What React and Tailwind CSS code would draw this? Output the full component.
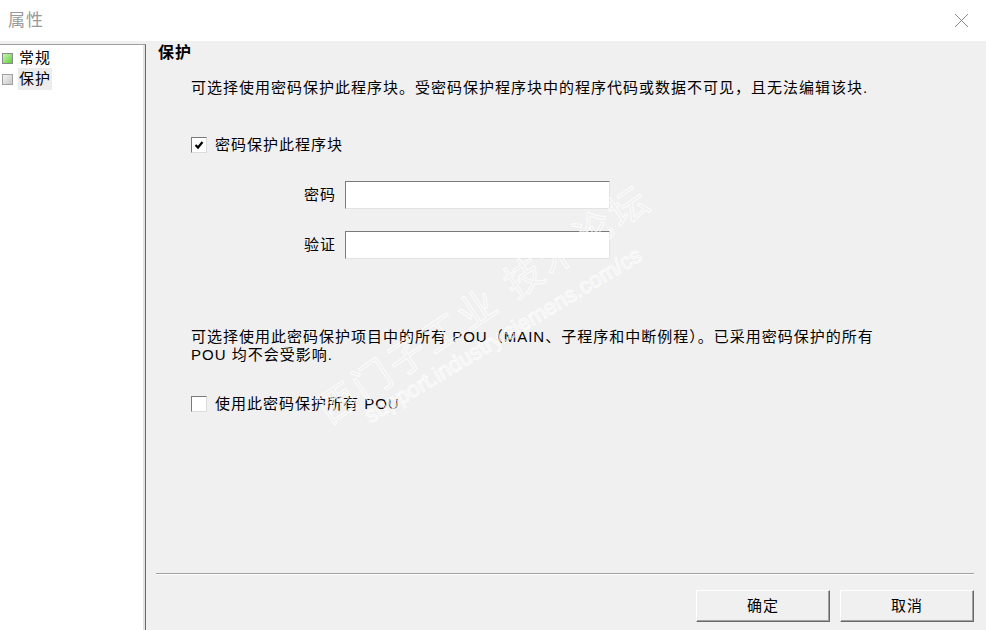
import { useState } from 'react';

const font = "font-['Liberation_Sans','Noto_Sans_CJK_SC',sans-serif]";

const Checkbox = ({ checked, onChange }) => (
  <button
    onClick={onChange}
    className="flex h-4 w-4 items-center justify-center border border-t-[#7a7a7a] border-l-[#7a7a7a] border-r-[#dcdcdc] border-b-[#dcdcdc] bg-white"
  >
    {checked && (
      <svg width="10" height="10" viewBox="0 0 10 10">
        <path d="M1.5 5 L4 7.5 L8.5 2" stroke="#000" strokeWidth="2.2" fill="none" />
      </svg>
    )}
  </button>
);

const Field = ({ label }) => (
  <div className="flex items-center">
    <span className="w-[199px] pr-[9px] text-right">{label}</span>
    <input className="h-[28px] w-[265px] border border-t-[#7a7a7a] border-l-[#7a7a7a] border-r-[#e3e3e3] border-b-[#e3e3e3] bg-white px-1 outline-none" />
  </div>
);

const DlgButton = ({ children }) => (
  <button className="h-[32px] w-[134px] border border-t-white border-l-white border-r-[#696969] border-b-[#696969] bg-[#f0f0f0] shadow-[inset_-1px_-1px_0_#a0a0a0] text-[15px] tracking-[1px]">
    {children}
  </button>
);

const App = () => {
  const [protect, setProtect] = useState(true);
  const [all, setAll] = useState(false);

  return (
    <div className={`relative flex h-[630px] w-[986px] flex-col overflow-hidden bg-[#f0f0f0] text-black ${font}`}>
      <div className="flex h-[41px] items-center justify-between bg-white pl-[8px] pr-[17px]">
        <span className="text-[17px] tracking-[1px] text-[#9a9a9a]">属性</span>
        <svg width="15" height="15" viewBox="0 0 15 15">
          <path d="M1 1 L14 14 M14 1 L1 14" stroke="#8a8a8a" strokeWidth="1" />
        </svg>
      </div>

      <div className="flex flex-1">
        <div className="mt-[3px] w-[146px] border-t border-r border-t-[#a0a0a0] border-r-[#696969] bg-white shadow-[inset_-2px_0_0_#e3e3e3] text-[15px] tracking-[1px]">
          <div className="flex h-[21px] items-center pt-[6px]">
            <span className="mx-[2px] h-[11px] w-[11px] border border-[#8a8a8a] bg-gradient-to-br from-[#c8f5b0] to-[#58d030]" />
            <span className="ml-[4px]">常规</span>
          </div>
          <div className="flex h-[22px] items-center mt-[2px]">
            <span className="mx-[2px] h-[11px] w-[11px] border border-[#a0a0a0] bg-gradient-to-br from-[#f4f4f4] to-[#c8c8c8]" />
            <span className="ml-[3px] bg-[#ececec] px-[1px]">保护</span>
          </div>
        </div>

        <div className="flex flex-1 flex-col text-[15px] tracking-[1px]">
          <div className="ml-[12px] mt-[2px] h-[20px] text-[16px] font-bold leading-[20px]">保护</div>
          <p className="ml-[45px] mt-[15px] leading-[20px]">
            可选择使用密码保护此程序块。受密码保护程序块中的程序代码或数据不可见，且无法编辑该块.
          </p>
          <label className="ml-[45px] mt-[37px] flex h-[20px] items-center gap-[8px]">
            <Checkbox checked={protect} onChange={() => setProtect(!protect)} />
            <span>密码保护此程序块</span>
          </label>
          <div className="mt-[26px] flex flex-col gap-[22px]">
            <Field label="密码" />
            <Field label="验证" />
          </div>
          <p className="ml-[45px] mt-[69px] leading-[18px]">
            可选择使用此密码保护项目中的所有 POU（MAIN、子程序和中断例程）。已采用密码保护的所有
            <br />
            POU 均不会受影响.
          </p>
          <label className="ml-[45px] mt-[30px] flex h-[20px] items-center gap-[8px]">
            <Checkbox checked={all} onChange={() => setAll(!all)} />
            <span>使用此密码保护所有 POU</span>
          </label>
          <div className="flex-1" />
          <div className="ml-[10px] mr-[12px] border-t border-b border-t-[#a0a0a0] border-b-white" />
          <div className="mt-[15px] mb-[8px] mr-[12px] flex justify-end gap-[10px]">
            <DlgButton>确定</DlgButton>
            <DlgButton>取消</DlgButton>
          </div>
        </div>
      </div>

      <div className="pointer-events-none absolute left-[485px] top-[305px] -translate-x-1/2 -translate-y-1/2 -rotate-[34deg] whitespace-nowrap text-[38px] tracking-[4px] text-transparent [-webkit-text-stroke:1px_rgba(255,255,255,0.8)]">
        西门子工业 技术论坛
      </div>
      <div className="pointer-events-none absolute left-[503px] top-[335px] -translate-x-1/2 -translate-y-1/2 -rotate-[31deg] whitespace-nowrap text-[22px] text-transparent [-webkit-text-stroke:1px_rgba(255,255,255,0.8)]">
        support.industry.siemens.com/cs
      </div>
    </div>
  );
};

export default App;
